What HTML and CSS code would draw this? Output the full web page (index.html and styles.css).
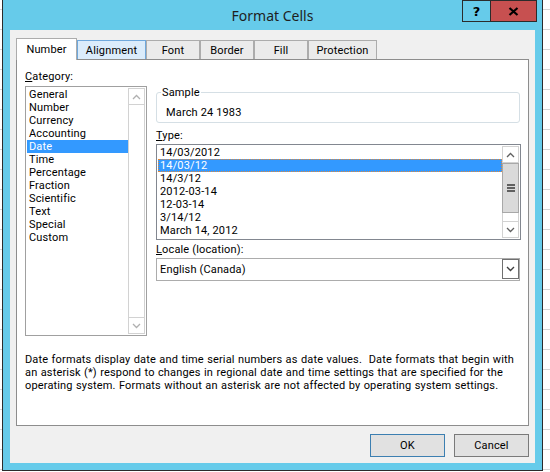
FILE: index.html
```html
<!DOCTYPE html>
<html>
<head>
<meta charset="utf-8">
<title>Format Cells</title>
<link rel="stylesheet" href="styles.css">
</head>
<body>
<div class="window">
  <div class="titlebar">
    <div></div>
    <div class="title">Format Cells</div>
    <div class="caption-btns">
      <div class="cap help">?</div>
      <div class="cap close">
        <svg width="11" height="9" viewBox="0 0 11 9"><path d="M1.5 1 L9.5 8 M9.5 1 L1.5 8" stroke="#000" stroke-width="2.2" fill="none"/></svg>
      </div>
    </div>
  </div>
  <div class="client">
    <div class="tabs">
      <div class="tab sel w-number">Number</div>
      <div class="tab hover w-alignment">Alignment</div>
      <div class="tab w-font">Font</div>
      <div class="tab w-border">Border</div>
      <div class="tab w-fill">Fill</div>
      <div class="tab w-protection">Protection</div>
    </div>
    <div class="panel">
      <div class="panel-top">
        <div class="col-left">
          <div class="label"><u>C</u>ategory:</div>
          <div class="listbox cat">
            <ul class="items">
              <li>General</li>
              <li>Number</li>
              <li>Currency</li>
              <li>Accounting</li>
              <li class="sel">Date</li>
              <li>Time</li>
              <li>Percentage</li>
              <li>Fraction</li>
              <li>Scientific</li>
              <li>Text</li>
              <li>Special</li>
              <li>Custom</li>
            </ul>
            <div class="sb disabled">
              <div class="sb-btn up"><svg width="9" height="6" viewBox="0 0 9 6"><path d="M1 5 L4.5 1.5 L8 5" stroke="currentColor" stroke-width="1.3" fill="none"/></svg></div>
              <div class="sb-btn down"><svg width="9" height="6" viewBox="0 0 9 6"><path d="M1 1 L4.5 4.5 L8 1" stroke="currentColor" stroke-width="1.3" fill="none"/></svg></div>
            </div>
          </div>
        </div>
        <div class="col-right">
          <fieldset class="sample">
            <legend>Sample</legend>
            <div class="sample-val">March 24 1983</div>
          </fieldset>
          <div class="label type-label"><u>T</u>ype:</div>
          <div class="listbox type">
            <ul class="items">
              <li>14/03/2012</li>
              <li class="sel">14/03/12</li>
              <li>14/3/12</li>
              <li>2012-03-14</li>
              <li>12-03-14</li>
              <li>3/14/12</li>
              <li>March 14, 2012</li>
            </ul>
            <div class="sb">
              <div class="sb-btn up"><svg width="9" height="6" viewBox="0 0 9 6"><path d="M1 5 L4.5 1.5 L8 5" stroke="currentColor" stroke-width="1.3" fill="none"/></svg></div>
              <div class="thumb">
                <svg width="8" height="8" viewBox="0 0 8 8"><rect x="0" y="0" width="8" height="2" fill="#606060"/><rect x="0" y="3" width="8" height="2" fill="#606060"/><rect x="0" y="6" width="8" height="2" fill="#606060"/></svg>
              </div>
              <div class="sb-btn down"><svg width="9" height="6" viewBox="0 0 9 6"><path d="M1 1 L4.5 4.5 L8 1" stroke="currentColor" stroke-width="1.3" fill="none"/></svg></div>
            </div>
          </div>
          <div class="label locale-label"><u>L</u>ocale (location):</div>
          <div class="combo">
            <div class="combo-text">English (Canada)</div>
            <div class="combo-btn"><svg width="9" height="6" viewBox="0 0 9 6"><path d="M1 1 L4.5 4.5 L8 1" stroke="#404040" stroke-width="1.4" fill="none"/></svg></div>
          </div>
        </div>
      </div>
      <p class="desc">Date formats display date and time serial numbers as date values.&nbsp; Date formats that begin with<br>an asterisk (*) respond to changes in regional date and time settings that are specified for the<br>operating system. Formats without an asterisk are not affected by operating system settings.</p>
    </div>
    <div class="buttons">
      <button class="btn default">OK</button>
      <button class="btn">Cancel</button>
    </div>
  </div>
</div>
</body>
</html>
```

FILE: styles.css
```css
html, body {
  margin: 0;
  padding: 0;
}
body {
  width: 550px;
  height: 472px;
  overflow: hidden;
  background: #fff repeating-linear-gradient(to bottom, transparent 0, transparent 9px, #d6d6d6 9px, #d6d6d6 10px, transparent 10px, transparent 20px);
  font-family: Roboto, "Noto Sans", sans-serif;
  font-size: 11px;
  letter-spacing: 0.15px;
  color: #000;
}
.window {
  margin-left: 2px;
  width: 541px;
  box-sizing: border-box;
  border: 1px solid #2b2b2b;
  border-top: none;
  background: #66cbea;
  padding: 0 7px 7px 7px;
}
.titlebar {
  display: grid;
  grid-template-columns: 1fr auto 1fr;
  height: 30px;
}
.title {
  font-family: "Noto Sans", sans-serif;
  letter-spacing: 0;
  font-size: 14px;
  color: #1e1e1e;
  line-height: 31px;
  white-space: nowrap;
}
.caption-btns {
  justify-self: end;
  display: flex;
  margin-right: -2px;
  height: 22px;
}
.cap {
  box-sizing: border-box;
  height: 22px;
  border: 1px solid #2b2b2b;
  display: flex;
  align-items: center;
  justify-content: center;
}
.help {
  width: 28px;
  border-right: none;
  font-weight: bold;
  font-size: 13px;
  font-family: "DejaVu Sans", sans-serif;
}
.close {
  width: 47px;
  background: #c75050;
}
.client {
  background: #f0f0f0;
  height: 433px;
  box-sizing: border-box;
  padding: 8px 6px 0 6px;
}
.tabs {
  display: flex;
  align-items: flex-end;
  height: 21px;
}
.tab {
  box-sizing: border-box;
  height: 19px;
  border: 1px solid #acacac;
  border-bottom: none;
  background: #ebebeb;
  display: flex;
  align-items: center;
  justify-content: center;
  padding-top: 1px;
  white-space: nowrap;
}
.tab.sel {
  height: 22px;
  margin-bottom: -1px;
  background: #fff;
  position: relative;
  z-index: 1;
  padding-top: 0;
}
.tab.hover {
  background: #dbecfb;
  border-color: #6fa8dc;
}
.w-number { width: 61px; }
.w-alignment { width: 69px; }
.w-font { width: 54px; }
.w-border { width: 54px; }
.w-fill { width: 54px; }
.w-protection { width: 69px; }
.panel {
  box-sizing: border-box;
  width: 513px;
  height: 367px;
  border: 1px solid #8d8d8d;
  background: #fff;
}
.panel-top {
  display: flex;
  gap: 9px;
  padding: 10px 0 0 8px;
}
.col-left {
  width: 122px;
}
.col-right {
  width: 365px;
  padding-top: 16px;
}
.label {
  line-height: 13px;
  height: 13px;
  margin-bottom: 3px;
  white-space: nowrap;
}
.type-label {
  margin-top: 6px;
  margin-bottom: 2px;
}
.locale-label {
  margin-top: 3px;
  margin-bottom: 2px;
}
.listbox {
  display: flex;
  box-sizing: border-box;
  border: 1px solid #a0a0a0;
  padding: 1px;
  background: #fff;
}
.listbox.cat {
  height: 250px;
}
.listbox.type {
  height: 96px;
  border-color: #828790;
}
.items {
  flex: 1;
  list-style: none;
  margin: 0;
  padding: 0;
  overflow: hidden;
}
.items li {
  height: 13px;
  line-height: 13px;
  padding-left: 2px;
  white-space: nowrap;
}
.items li.sel {
  background: #3399ff;
  color: #fff;
}
.type .items li.sel {
  outline: 1px dotted #e0883a;
  outline-offset: -1px;
}
.sb {
  width: 17px;
  box-sizing: border-box;
  display: flex;
  flex-direction: column;
  border: 1px solid #d2d2d2;
  color: #606060;
}
.sb.disabled {
  color: #b0b0b0;
}
.sb-btn {
  height: 15px;
  display: flex;
  align-items: center;
  justify-content: center;
  flex: none;
}
.sb-btn.up {
  border-bottom: 1px solid #d2d2d2;
}
.sb-btn.down {
  margin-top: auto;
  border-top: 1px solid #d2d2d2;
}
.thumb {
  box-sizing: border-box;
  height: 50px;
  margin: 0 -1px;
  border: 1px solid #a8a8a8;
  background: #dadada;
  display: flex;
  align-items: center;
  justify-content: center;
  flex: none;
}
.sample {
  margin: 0;
  width: 364px;
  box-sizing: border-box;
  min-width: 0;
  border: 1px solid #d5dfe5;
  border-radius: 3px;
  padding: 7px 0 3px 9px;
}
.sample legend {
  padding: 0 1px;
  margin-left: -5px;
  line-height: 13px;
}
.sample-val {
  line-height: 13px;
}
.combo {
  display: flex;
  align-items: flex-start;
  box-sizing: border-box;
  width: 364px;
  height: 23px;
  border: 1px solid #acacac;
  background: #fff;
}
.combo-text {
  flex: 1;
  line-height: 21px;
  padding-left: 3px;
}
.combo-btn {
  box-sizing: border-box;
  width: 17px;
  height: 20px;
  border: 1px solid #707070;
  display: flex;
  align-items: center;
  justify-content: center;
}
.desc {
  margin: 17px 0 0 8px;
  line-height: 13px;
  word-spacing: 0.5px;
  white-space: nowrap;
}
.buttons {
  display: flex;
  justify-content: flex-end;
  gap: 9px;
  margin-top: 8px;
}
.btn {
  box-sizing: border-box;
  width: 75px;
  height: 23px;
  border: 1px solid #7a7a7a;
  background: #e1e1e1;
  font-family: Roboto, "Noto Sans", sans-serif;
  letter-spacing: 0.15px;
  font-size: 11px;
  color: #000;
  padding: 0;
  margin: 0;
}
.btn.default {
  border-color: #3c7fb1;
}
```
